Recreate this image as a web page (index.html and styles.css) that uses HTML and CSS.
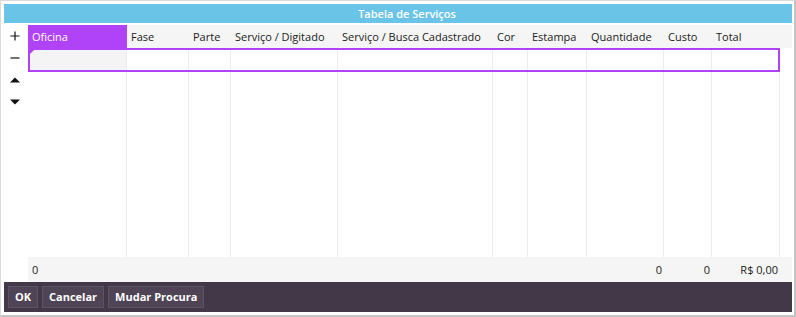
FILE: index.html
```html
<!DOCTYPE html>
<html lang="pt">
<head>
<meta charset="utf-8">
<title>Tabela de Serviços</title>
<link rel="stylesheet" href="styles.css">
</head>
<body>
<div class="frame">
  <div class="window">
    <div class="titlebar">Tabela de Serviços</div>
    <div class="main">
      <div class="side">
        <button class="tool" aria-label="Adicionar">
          <svg width="10" height="10" viewBox="0 0 10 10"><path d="M5 0.5v9M0.5 5h9" stroke="#111" stroke-width="1.2"/></svg>
        </button>
        <button class="tool" aria-label="Remover">
          <svg width="10" height="10" viewBox="0 0 10 10"><path d="M0.5 5h9" stroke="#111" stroke-width="1.2"/></svg>
        </button>
        <button class="tool" aria-label="Subir">
          <svg width="10" height="6" viewBox="0 0 10 6"><path d="M0 5.5L5 0.5L10 5.5Z" fill="#111"/></svg>
        </button>
        <button class="tool" aria-label="Descer">
          <svg width="10" height="6" viewBox="0 0 10 6"><path d="M0 0.5L10 0.5L5 5.5Z" fill="#111"/></svg>
        </button>
      </div>
      <div class="table">
        <div class="head cols">
          <div class="hcell active">Oficina</div>
          <div class="hcell">Fase</div>
          <div class="hcell">Parte</div>
          <div class="hcell">Serviço / Digitado</div>
          <div class="hcell">Serviço / Busca Cadastrado</div>
          <div class="hcell">Cor</div>
          <div class="hcell">Estampa</div>
          <div class="hcell">Quantidade</div>
          <div class="hcell">Custo</div>
          <div class="hcell">Total</div>
          <div class="hcell"></div>
        </div>
        <div class="rowwrap">
          <div class="row">
            <div class="cell first"><span class="corner"></span></div>
            <div class="cell"></div>
            <div class="cell"></div>
            <div class="cell"></div>
            <div class="cell"></div>
            <div class="cell"></div>
            <div class="cell"></div>
            <div class="cell"></div>
            <div class="cell"></div>
            <div class="cell last"></div>
          </div>
        </div>
        <div class="body cols">
          <div class="bcell"></div>
          <div class="bcell"></div>
          <div class="bcell"></div>
          <div class="bcell"></div>
          <div class="bcell"></div>
          <div class="bcell"></div>
          <div class="bcell"></div>
          <div class="bcell"></div>
          <div class="bcell"></div>
          <div class="bcell"></div>
          <div class="bcell none"></div>
        </div>
        <div class="foot cols">
          <div class="fcell left">0</div>
          <div class="fcell"></div>
          <div class="fcell"></div>
          <div class="fcell"></div>
          <div class="fcell"></div>
          <div class="fcell"></div>
          <div class="fcell"></div>
          <div class="fcell num">0</div>
          <div class="fcell num">0</div>
          <div class="fcell num">R$ 0,00</div>
          <div class="fcell"></div>
        </div>
      </div>
    </div>
    <div class="actions">
      <button class="btn">OK</button>
      <button class="btn">Cancelar</button>
      <button class="btn">Mudar Procura</button>
    </div>
  </div>
</div>
</body>
</html>
```
FILE: styles.css
```css
* { box-sizing: border-box; }
html, body { margin: 0; padding: 0; background: #ffffff; }
body {
  font-family: "Open Sans", "Noto Sans", sans-serif;
  font-size: 11px;
  color: #1b1b1b;
}
.frame {
  width: 796px;
  height: 317px;
  border-left: 1px solid #dadada;
  border-top: 1px solid #dadada;
  border-right: 2px solid #c4c4c4;
  border-bottom: 2px solid #c4c4c4;
  padding: 3px 2px 3px 3px;
}
.window {
  height: 100%;
  display: flex;
  flex-direction: column;
}
.titlebar {
  height: 19px;
  background: #6ac4e8;
  color: #ffffff;
  font-weight: 600;
  font-size: 11px;
  line-height: 19px;
  text-align: center;
  padding-left: 18px;
  flex: none;
}
.main {
  flex: 1;
  display: flex;
  padding-top: 2px;
  min-height: 0;
}
.side {
  width: 24px;
  flex: none;
  display: flex;
  flex-direction: column;
  align-items: center;
  padding-top: 0;
}
.tool {
  border: 0;
  background: transparent;
  padding: 0;
  width: 24px;
  height: 22px;
  display: flex;
  align-items: center;
  justify-content: center;
  margin-left: -3px;
}
.table {
  flex: 1;
  display: flex;
  flex-direction: column;
}
.cols {
  display: grid;
  grid-template-columns: 99px 62px 42px 107px 155px 35px 59px 77px 48px 68px 1fr;
}
.head {
  height: 23px;
  background: #f5f5f5;
  flex: none;
}
.hcell {
  padding-left: 4px;
  line-height: 23px;
  white-space: nowrap;
}
.hcell.active {
  background: #b043f8;
  color: #ffffff;
}
.rowwrap {
  width: 752px;
  height: 24px;
  border: 2px solid #b043f8;
  flex: none;
}
.row {
  display: grid;
  grid-template-columns: 97px 62px 42px 107px 155px 35px 59px 77px 48px 66px;
  height: 100%;
}
.cell {
  border-right: 1px solid #ececec;
  position: relative;
}
.cell.last { border-right: 0; }
.cell.first { background: #f4f4f4; }
.corner {
  position: absolute;
  left: 0;
  top: 0;
  width: 0;
  height: 0;
  border-top: 4px solid #b043f8;
  border-right: 4px solid transparent;
}
.body {
  flex: 1;
}
.bcell {
  border-right: 1px solid #ececec;
}
.bcell.none { border-right: 0; }
.foot {
  height: 25px;
  background: #f5f5f5;
  flex: none;
}
.fcell {
  line-height: 25px;
  white-space: nowrap;
}
.fcell.left { padding-left: 4px; }
.fcell.num { text-align: right; padding-right: 2px; }
.actions {
  height: 30px;
  flex: none;
  background: #433848;
  display: flex;
  align-items: center;
  gap: 4px;
  padding-left: 4px;
}
.btn {
  height: 22px;
  border: 1px solid #5d5363;
  background: #4f4455;
  color: #ffffff;
  font-family: "Open Sans", "Noto Sans", sans-serif;
  font-weight: 700;
  font-size: 11px;
  padding: 0 6px;
  line-height: 20px;
}
```
